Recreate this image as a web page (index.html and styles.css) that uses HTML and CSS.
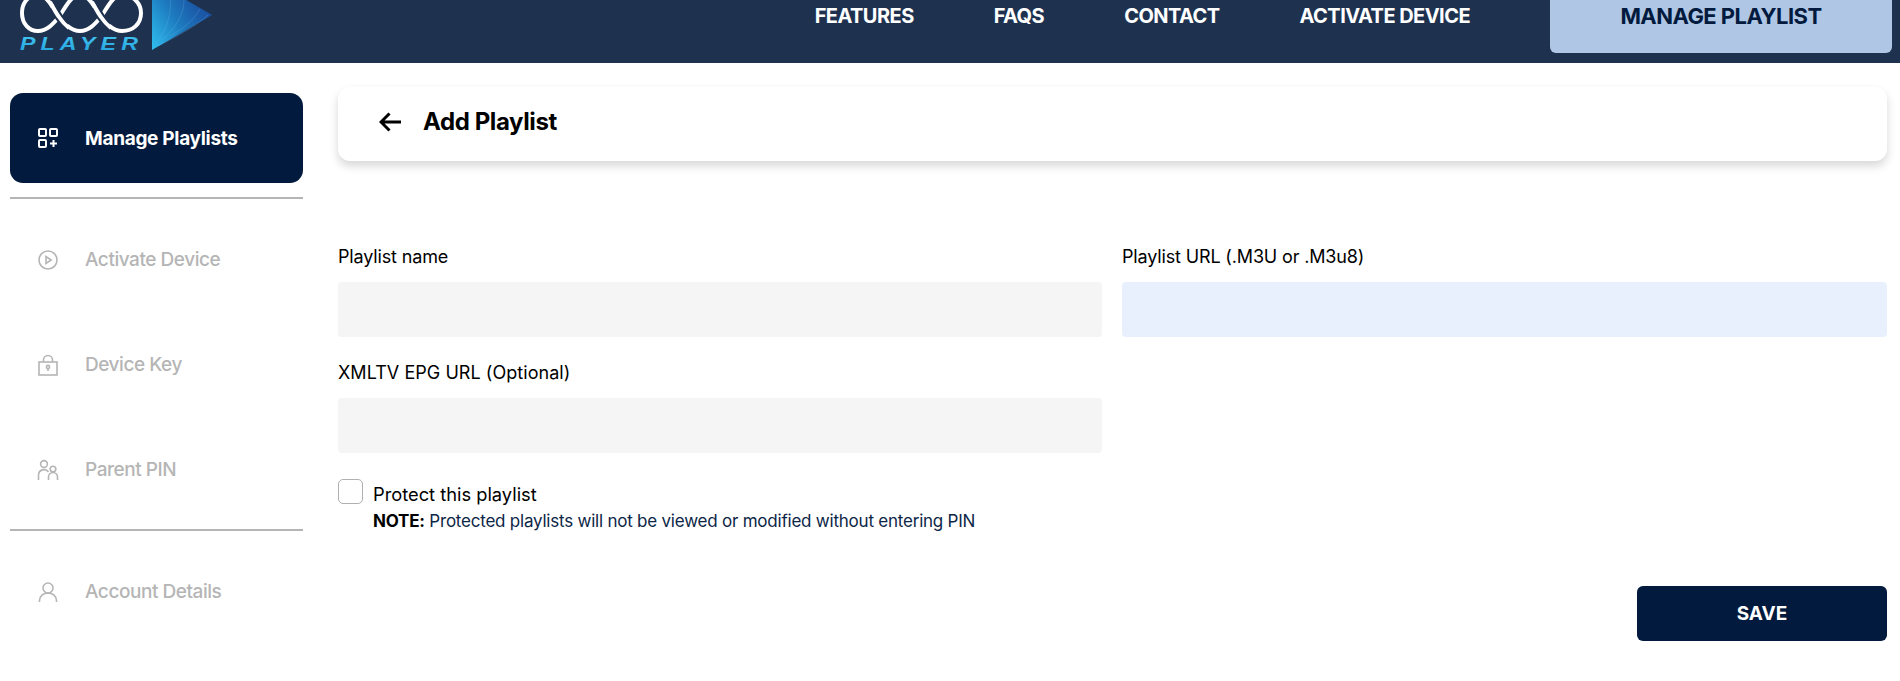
FILE: index.html
```html
<!DOCTYPE html>
<html lang="en">
<head>
<meta charset="utf-8">
<title>Add Playlist</title>
<link rel="stylesheet" href="styles.css">
</head>
<body>
<header class="topbar">
  <svg class="logo" width="200" height="63" viewBox="0 0 200 63" aria-label="Player logo">
    <defs>
      <linearGradient id="tri" x1="0" y1="1" x2="1" y2="0.25">
        <stop offset="0" stop-color="#2fc0f0"/>
        <stop offset="0.45" stop-color="#1d7cc0"/>
        <stop offset="0.75" stop-color="#1b5aa8"/>
        <stop offset="1" stop-color="#1a46a0"/>
      </linearGradient>
      <linearGradient id="txt" x1="0" y1="0" x2="0" y2="1">
        <stop offset="0" stop-color="#45c6f0"/>
        <stop offset="1" stop-color="#1f9fdc"/>
      </linearGradient>
    </defs>
    <path class="loop" d="M38 -5C28 -5 22 3 22 13C22 24 29 31 38 31C47 31 53 24 59 17C65 8 71 -5 80 -5C89 -5 95 8 101 17C107 24 113 31 122 31C133 31 141 24 141 13C141 3 133 -5 122 -5C113 -5 107 8 101 17C95 24 89 31 80 31C71 31 65 24 59 17C53 8 47 -5 38 -5Z"/>
    <path class="gap" d="M53 7C55 10 57 14 59 17C61 20 63 23 67 26M95 7C97 10 99 14 101 17C103 20 105 23 109 26"/>
    <path class="over" d="M50 2C53 7 56 13 59 17C61 20 64 24 69 28M92 2C95 7 98 13 101 17C103 20 106 24 111 28"/>
    <polygon points="152,-20 152,50 212,15" fill="url(#tri)"/>
    <path class="streak" d="M156 44C168 28 172 12 170 -6M162 40C176 28 184 14 184 0M170 36C184 28 194 20 200 9M158 46C178 36 196 26 208 15"/>
    <text class="logo-text" x="20" y="50" textLength="123" lengthAdjust="spacingAndGlyphs" fill="url(#txt)">PLAYER</text>
  </svg>
  <nav class="nav">
    <a class="nav-link nav-features">FEATURES</a>
    <a class="nav-link nav-faqs">FAQS</a>
    <a class="nav-link nav-contact">CONTACT</a>
    <a class="nav-link nav-activate">ACTIVATE DEVICE</a>
    <a class="nav-cta">MANAGE PLAYLIST</a>
  </nav>
</header>
<div class="layout">
  <aside class="sidebar">
    <a class="side-item active">
      <svg class="ico" viewBox="0 0 20 20"><rect x="1" y="1" width="7" height="7" rx="1"/><rect x="12" y="1" width="7" height="7" rx="1"/><rect x="1" y="12" width="7" height="7" rx="1"/><path d="M15.500 12v7M12 15.500h7"/></svg>
      <span>Manage Playlists</span>
    </a>
    <hr class="rule rule-top">
    <a class="side-item">
      <svg class="ico" viewBox="0 0 20 20"><circle cx="10" cy="10" r="9"/><path d="M8 6.500v7l5.200-3.500z"/></svg>
      <span>Activate Device</span>
    </a>
    <a class="side-item">
      <svg class="ico" viewBox="0 0 20 20"><rect x="1" y="7" width="18" height="13"/><path d="M5.500 7V5a4.500 4.500 0 0 1 9 0v2"/><circle cx="10" cy="12" r="1.600"/><path d="M10 13.600v2.400"/></svg>
      <span>Device Key</span>
    </a>
    <a class="side-item">
      <svg class="ico" viewBox="0 0 20 20"><circle cx="6" cy="4" r="3.400"/><circle cx="15" cy="9" r="2.800"/><path d="M0.500 20v-5a5.500 5.500 0 0 1 10-3M10.500 20v-3a4.500 4.500 0 0 1 9 0v3"/></svg>
      <span>Parent PIN</span>
    </a>
    <hr class="rule rule-bottom">
    <a class="side-item">
      <svg class="ico" viewBox="0 0 20 20"><circle cx="10" cy="6" r="5"/><path d="M1.500 20v-1.500a8.500 7.500 0 0 1 17 0V20"/></svg>
      <span>Account Details</span>
    </a>
  </aside>
  <main class="content">
    <section class="title-card">
      <svg class="back" width="23" height="20" viewBox="0 0 23 20"><path d="M22 10H2M10.500 1.500L2 10l8.500 8.500"/></svg>
      <h1>Add Playlist</h1>
    </section>
    <form class="form">
      <div class="grid">
        <div class="field">
          <label>Playlist name</label>
          <div class="input"></div>
        </div>
        <div class="field">
          <label>Playlist URL (.M3U or .M3u8)</label>
          <div class="input input-blue"></div>
        </div>
        <div class="field">
          <label class="label-wide">XMLTV EPG URL (Optional)</label>
          <div class="input"></div>
        </div>
      </div>
      <div class="protect">
        <span class="check"></span>
        <div class="protect-text">
          <div class="protect-label">Protect this playlist</div>
          <div class="note"><b>NOTE:</b> Protected playlists will not be viewed or modified without entering PIN</div>
        </div>
      </div>
      <div class="actions"><button type="button" class="save">SAVE</button></div>
    </form>
  </main>
</div>
</body>
</html>
```
FILE: styles.css
```css
* { box-sizing: border-box; }
html, body { margin: 0; padding: 0; height: 681px; overflow: hidden; background: #fff; }
body { font-family: "Inter", "Noto Sans", sans-serif; color: #000; }

.topbar {
  height: 63px;
  background: #1e3250;
  display: flex;
  justify-content: space-between;
  overflow: hidden;
}
.logo { display: block; flex: none; overflow: visible; }
.loop { fill: none; stroke: #fff; stroke-width: 4; }
.gap { fill: none; stroke: #1e3250; stroke-width: 8; }
.over { fill: none; stroke: #fff; stroke-width: 4; }
.streak { fill: none; stroke: #6fb4e8; stroke-width: 0.6; opacity: 0.45; }
.logo-text { font: italic 700 18px "Liberation Sans", sans-serif; letter-spacing: 4px; }

.nav { display: flex; align-items: flex-start; padding-right: 8px; }
.nav-link {
  color: #fff;
  font-size: 20px;
  font-weight: 700;
  letter-spacing: -0.55px;
  line-height: 22px;
  margin-top: 5px;
  margin-right: 80px;
  white-space: nowrap;
}
.nav-cta {
  width: 342px;
  height: 53px;
  background: #b0c6e5;
  color: #021a3d;
  border-radius: 0 0 6px 6px;
  font-size: 22px;
  font-weight: 700;
  letter-spacing: -0.55px;
  line-height: 32px;
  text-align: center;
}

.layout { display: flex; padding: 24px 13px 0 10px; gap: 35px; }

.sidebar { width: 293px; flex: none; display: flex; flex-direction: column; padding-top: 6px; }
.side-item {
  height: 105px;
  display: flex;
  align-items: center;
  gap: 27px;
  padding-left: 28px;
  color: #b5b5b5;
  font-size: 19px;
  font-weight: 500;
  letter-spacing: -0.45px;
}
.side-item.active {
  height: 90px;
  background: #021a3d;
  color: #fff;
  border-radius: 13px;
  font-weight: 700;
  letter-spacing: -0.3px;
}
.ico { width: 20px; height: 20px; flex: none; fill: none; stroke: #b5b5b5; stroke-width: 1.6; overflow: visible; }
.active .ico { stroke: #fff; stroke-width: 2; }
.rule { height: 2px; margin: 0; border: 0; background: #b5b5b5; }
.rule-top { margin-top: 14px; margin-bottom: 8px; }
.rule-bottom { margin-top: 7px; margin-bottom: 8px; }

.content { flex: 1; min-width: 0; }
.title-card {
  height: 74px;
  background: #fff;
  border-radius: 12px;
  box-shadow: 0 5px 10px rgba(0, 0, 0, 0.16);
  display: flex;
  align-items: center;
  gap: 21px;
  padding-left: 41px;
  padding-bottom: 5px;
}
.back { fill: none; stroke: #000; stroke-width: 3; }
.title-card h1 { margin: 0; font-size: 24px; font-weight: 700; letter-spacing: -0.4px; }

.form { padding-top: 81px; }
.grid { display: grid; grid-template-columns: 764fr 765fr; column-gap: 20px; row-gap: 21px; }
.field label { display: block; font-size: 18px; line-height: 30px; letter-spacing: -0.15px; margin-bottom: 10px; }
.field .label-wide { letter-spacing: 0.05px; }
.input { height: 55px; background: #f5f5f5; border-radius: 4px; }
.input-blue { background: #e8f0fe; }

.protect { display: flex; gap: 10px; margin-top: 26px; }
.check { width: 25px; height: 25px; flex: none; border: 1px solid #b0b0b0; border-radius: 5px; background: #fff; }
.protect-label { font-size: 18.3px; line-height: 28px; margin-top: 1px; }
.note { font-size: 17px; line-height: 27px; color: #0d2647; letter-spacing: -0.22px; }
.note b { color: #000; font-weight: 700; }

.actions { display: flex; justify-content: flex-end; margin-top: 51px; }
.save {
  width: 250px;
  height: 55px;
  background: #021a3d;
  color: #fff;
  border: 0;
  border-radius: 6px;
  font: 700 19px "Inter", sans-serif;
}
```
